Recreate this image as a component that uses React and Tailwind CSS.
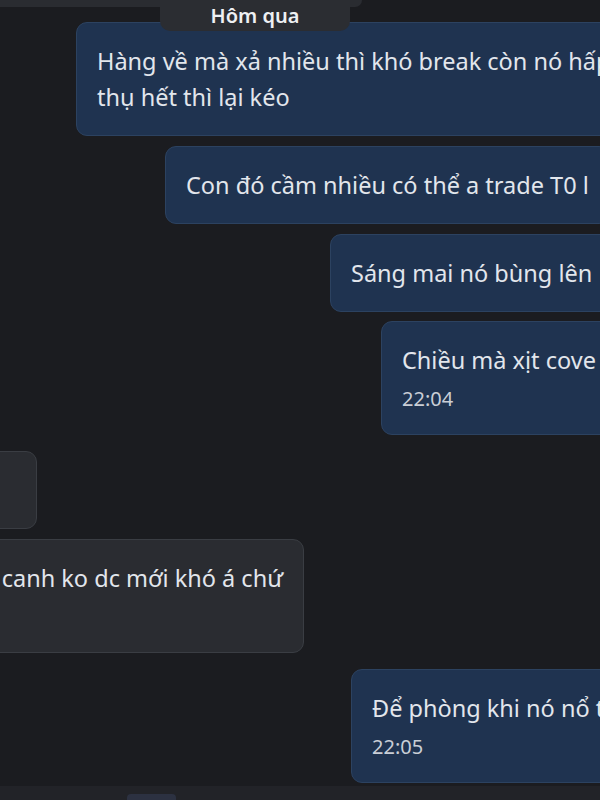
import React from "react";

const blue = "shrink-0 whitespace-nowrap rounded-[11px] border border-[#2c4260] bg-[#1f3350] px-[20px] py-[20px] text-[23.5px] leading-[36px] text-[#e2e6ec]";
const gray = "shrink-0 whitespace-nowrap rounded-[11px] border border-[#3a3d43] bg-[#2a2c31] px-[20px] py-[20px] text-[23.5px] leading-[36px] text-[#e2e6ec]";
const time = "mt-[6px] text-[20px] leading-[30px] text-[#c9ced6]";

export default function App() {
  return (
    <div
      className="relative flex h-[800px] w-[600px] flex-col overflow-hidden bg-[#1b1c20]"
      style={{ fontFamily: '"Noto Sans", "Open Sans", sans-serif' }}
    >
      <div className="h-[7px] w-[362px] shrink-0 rounded-br-[8px] bg-[#2a2c31]" />

      <div className="absolute left-[160px] top-0 z-10 flex h-[31px] w-[190px] items-center justify-center rounded-b-[10px] bg-[#2b2d32] text-[20px] font-semibold text-[#eef0f3]">
        Hôm qua
      </div>

      <div className="ml-[76px] mt-[15px] flex">
        <div className={blue}>
          Hàng về mà xả nhiều thì khó break còn nó hấp
          <br />
          thụ hết thì lại kéo
        </div>
      </div>

      <div className="ml-[165px] mt-[10px] flex">
        <div className={blue}>Con đó cầm nhiều có thể a trade T0 l</div>
      </div>

      <div className="ml-[330px] mt-[10px] flex">
        <div className={`${blue} min-w-[300px]`}>Sáng mai nó bùng lên</div>
      </div>

      <div className="ml-[381px] mt-[9px] flex">
        <div className={`${blue} min-w-[300px]`}>
          <div>Chiều mà xịt cove</div>
          <div className={time}>22:04</div>
        </div>
      </div>

      <div className="mt-[16px] flex w-[37px] justify-end">
        <div className={`${gray} h-[78px] w-[140px]`} />
      </div>

      <div className="mt-[10px] flex w-[304px] justify-end">
        <div className={`${gray} w-[460px]`}>
          <div className="text-right">canh ko dc mới khó á chứ</div>
          <div className="mt-[6px] h-[30px]" />
        </div>
      </div>

      <div className="ml-[351px] mt-[16px] flex">
        <div className={`${blue} min-w-[300px]`}>
          <div>Để phòng khi nó nổ t</div>
          <div className={time}>22:05</div>
        </div>
      </div>

      <div className="mt-[3px] flex h-[20px] shrink-0 bg-[#222328] pl-[127px] pt-[8px]">
        <div className="h-[12px] w-[49px] rounded-t-[4px] bg-[#2c3141]" />
      </div>
    </div>
  );
}
